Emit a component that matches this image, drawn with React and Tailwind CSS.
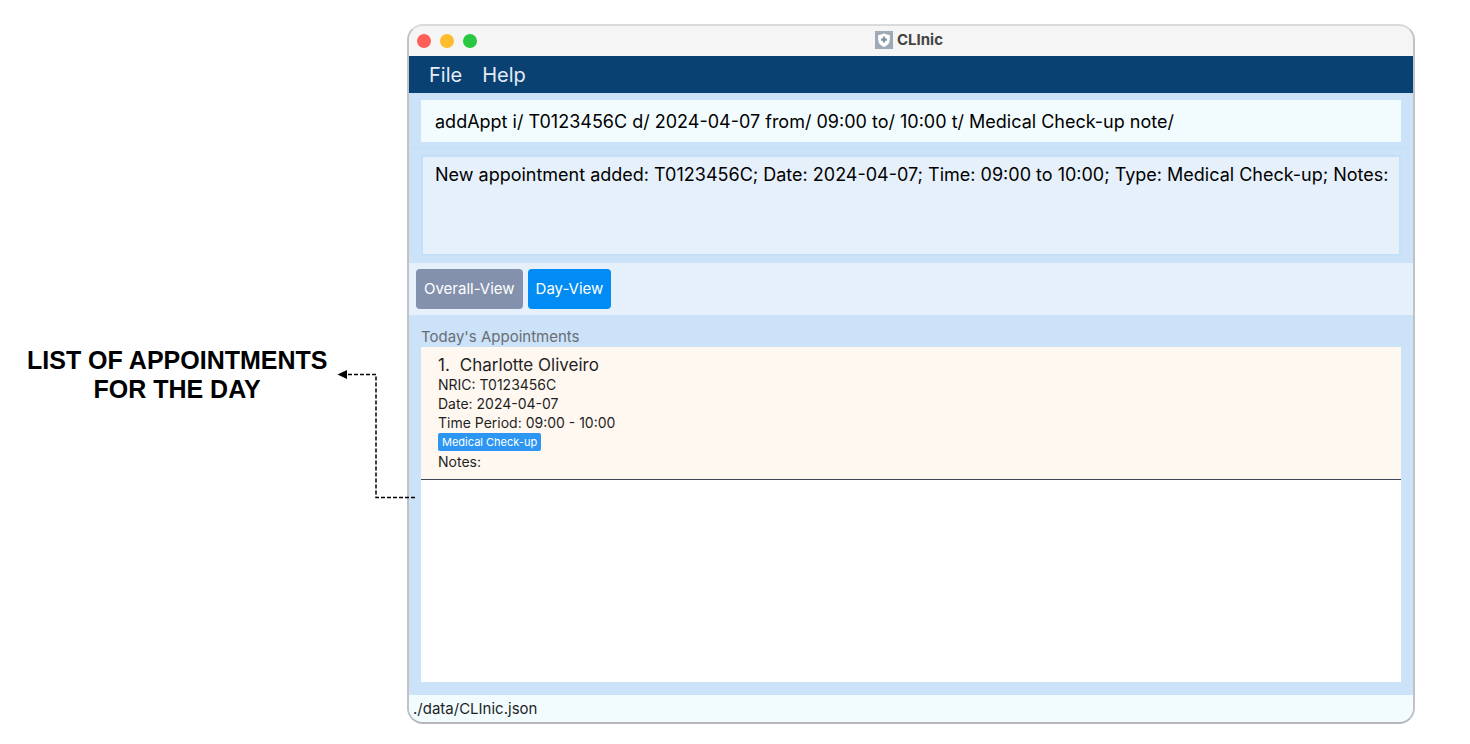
import React from "react";

function ShieldIcon() {
  return (
    <svg viewBox="0 0 18 18" className="size-[18px]" aria-hidden="true">
      <rect width="18" height="18" fill="#9eabb7" />
      <path
        d="M9 2.2 C7.4 3.4 5.4 3.9 3.2 3.9 V8.4 C3.2 12 5.5 14.6 9 16 C12.5 14.6 14.8 12 14.8 8.4 V3.9 C12.6 3.9 10.6 3.4 9 2.2 Z"
        fill="#ffffff"
      />
      <path d="M9 5.6 V11.6 M6 8.6 H12" stroke="#8493a1" strokeWidth="2.2" />
    </svg>
  );
}

function TitleBar() {
  return (
    <header className="relative flex h-[30px] items-center justify-center bg-[#f5f5f5] pb-0.5">
      <div className="absolute inset-y-0 left-2 flex items-center gap-[9px]">
        <button aria-label="Close" className="size-3.5 rounded-full bg-[#ff5f57]" />
        <button aria-label="Minimize" className="size-3.5 rounded-full bg-[#febc2e]" />
        <button aria-label="Zoom" className="size-3.5 rounded-full bg-[#28c840]" />
      </div>
      <h1 className="flex items-center gap-1 pr-1 text-[15px] leading-5 font-bold text-[#444444]">
        <ShieldIcon />
        CLInic
      </h1>
    </header>
  );
}

function MenuBar() {
  return (
    <nav className="flex h-[37px] items-center gap-5 bg-[#094173] px-5 text-xl text-[#e4ecf7]">
      <button>File</button>
      <button>Help</button>
    </nav>
  );
}

function AppointmentCard({ index, name, nric, date, period, type, notes }) {
  return (
    <li className="border-b border-[#3c4656] bg-[#fff8f1] px-[17px] py-2 text-sm leading-[19px] text-[#1f1f1f]">
      <h2 className="flex gap-2.5 text-[17px] leading-5">
        <span>{index}.</span>
        <span>{name}</span>
      </h2>
      <p>NRIC: {nric}</p>
      <p>Date: {date}</p>
      <p>Time Period: {period}</p>
      <p className="flex py-px">
        <span className="rounded-xs bg-[#2d96f3] px-1 text-[11px] leading-[18px] text-white">{type}</span>
      </p>
      <p>Notes: {notes}</p>
    </li>
  );
}

const appointments = [
  {
    index: 1,
    name: "Charlotte Oliveiro",
    nric: "T0123456C",
    date: "2024-04-07",
    period: "09:00 - 10:00",
    type: "Medical Check-up",
    notes: "",
  },
];

function ClinicWindow() {
  return (
    <main className="flex min-w-0 flex-1 flex-col overflow-hidden rounded-2xl border-2 border-t-[#dadada] border-x-[#c0c2c4] border-b-[#b4b6b8] bg-[#cbe2f9] font-['Inter',sans-serif]">
      <TitleBar />
      <MenuBar />
      <div className="border-b border-[#c4dff8] px-3 pt-[7px] pb-1.5">
        <input
          aria-label="Command"
          defaultValue="addAppt i/ T0123456C d/ 2024-04-07 from/ 09:00 to/ 10:00 t/ Medical Check-up note/"
          className="block h-[42px] w-full bg-[#f2fcff] px-3.5 text-lg text-black outline-none"
        />
      </div>
      <div className="px-3 pt-1.5 pb-[7px]">
        <textarea
          aria-label="Result"
          readOnly
          value="New appointment added: T0123456C; Date: 2024-04-07; Time: 09:00 to 10:00; Type: Medical Check-up; Notes:"
          className="block h-[101px] w-full resize-none overflow-hidden border-2 border-[#c4dff8] bg-[#e6f0fb] px-3 py-1.5 text-lg leading-6 whitespace-pre text-black outline-none"
        />
      </div>
      <div className="flex h-[52px] items-center gap-[5px] bg-[#e6f0fb] px-[7px] text-[15px] text-white">
        <button className="h-10 rounded-sm bg-[#8491ad] px-2">Overall-View</button>
        <button className="h-10 rounded-sm bg-[#008cf4] px-2">Day-View</button>
      </div>
      <section className="flex flex-1 flex-col px-3 pt-3 pb-[13px]">
        <h2 className="text-[15px] leading-5 text-[#6a6e73]">Today's Appointments</h2>
        <ul className="flex-1 bg-white">
          {appointments.map((a) => (
            <AppointmentCard key={a.index} {...a} />
          ))}
        </ul>
      </section>
      <footer className="bg-[#f2fcff] px-1 pt-1 pb-[3px] text-[15px] leading-5 text-[#1f1f1f]">
        ./data/CLInic.json
      </footer>
    </main>
  );
}

export default function App() {
  return (
    <div className="flex min-h-screen bg-white pt-6 pr-[55px] pb-5">
      <aside className="relative w-[407px] shrink-0 pt-[322px] font-['Liberation_Sans',sans-serif]">
        <p className="ml-[27px] w-[300px] text-center text-[25px] leading-[29px] font-bold whitespace-nowrap text-black">
          LIST OF APPOINTMENTS
          <br />
          FOR THE DAY
        </p>
        <svg
          viewBox="0 0 80 136"
          className="absolute top-[344px] left-[336px] h-[136px] w-20"
          aria-hidden="true"
        >
          <path
            d="M79 129.5 H40 V6.5 H10"
            fill="none"
            stroke="#000000"
            strokeWidth="1.5"
            strokeDasharray="4 2"
          />
          <path d="M1.5 6.5 L11 2 V11 Z" fill="#000000" />
        </svg>
      </aside>
      <ClinicWindow />
    </div>
  );
}
